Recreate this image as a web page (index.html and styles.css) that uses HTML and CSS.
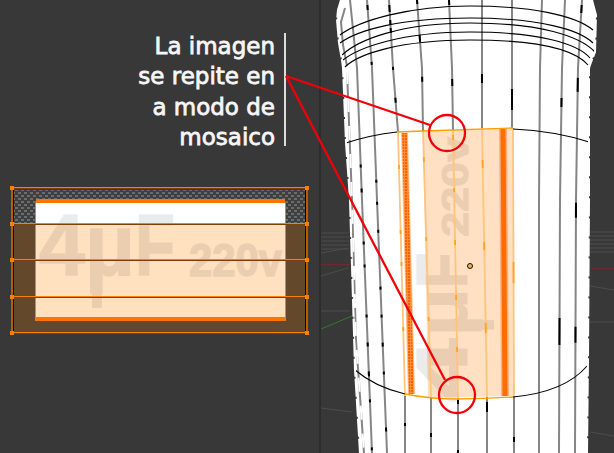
FILE: index.html
```html
<!DOCTYPE html>
<html lang="es">
<head>
<meta charset="utf-8">
<title>Mosaico UV</title>
<link rel="stylesheet" href="styles.css">
</head>
<body>
<main class="stage">
<svg class="scene" width="614" height="453" viewBox="0 0 614 453" xmlns="http://www.w3.org/2000/svg">
  <defs>
    <pattern id="check" width="6" height="6" patternUnits="userSpaceOnUse">
      <rect width="6" height="6" fill="#3f3f3f"/>
      <rect x="0" y="0" width="3" height="2" fill="#6c6c6c"/>
      <rect x="3" y="3" width="3" height="2" fill="#6c6c6c"/>
    </pattern>
    <pattern id="dots" width="3" height="3" patternUnits="userSpaceOnUse">
      <rect width="3" height="3" fill="#ff8a3a"/>
      <rect width="2" height="2" fill="#f86400"/>
    </pattern>
  </defs>

  <!-- viewport backdrop -->
  <g class="grid">
    <path d="M321 233H350M321 237H349M321 241H349M321 245H349M321 249H349M321 253L348 248M321 276L348 268M321 311H350"/>
    <path d="M590 232H614M590 236H614M590 240H614M590 244H614M590 248H614M590 252H614M590 286L614 290M590 322H614M590 432L614 436"/>
    <path d="M321 408L352 412"/>
  </g>
  <path class="axis-red" d="M321 264.500H351M590 268.500H614"/>
  <path class="axis-green" d="M321 329L352 316"/>
  <rect class="divider" x="319" y="0" width="2" height="453"/>

  <!-- UV editor -->
  <rect class="uv-check" x="13" y="190" width="293" height="34"/>
  <rect class="uv-dim" x="13" y="224" width="293" height="109"/>
  <rect class="uv-edge" x="35" y="203" width="251" height="118"/>
  <rect class="uv-white" x="36" y="199" width="249" height="25"/>
  <rect class="uv-peach" x="36" y="224" width="249" height="93"/>
  <rect class="uv-band" x="36" y="199" width="249" height="4"/>
  <rect class="uv-band" x="36" y="317" width="249" height="4"/>
  <g class="label-ink">
    <text class="ink-big" y="275"><tspan x="39" textLength="46" lengthAdjust="spacingAndGlyphs">4</tspan><tspan x="85" textLength="50" lengthAdjust="spacingAndGlyphs">μ</tspan><tspan x="135" textLength="40" lengthAdjust="spacingAndGlyphs">F</tspan></text>
    <rect x="92" y="285" width="10" height="23"/>
    <text class="ink-small" x="189" y="276" textLength="93" lengthAdjust="spacingAndGlyphs">220v</text>
  </g>
  <g class="uv-black">
    <path d="M12 188.500H308M12 224.500H308M12 260.500H308M12 297.500H308M12 333.500H308"/>
    <path d="M13.500 188V333M305.500 188V333"/>
  </g>
  <g class="uv-orange">
    <path d="M12 187.750H308M12 223.750H308M12 259.750H308M12 296.750H308M12 332.750H308"/>
  </g>
  <g class="uv-side">
    <path d="M12 188V333M307 188V333"/>
  </g>
  <g class="uv-vert">
    <rect x="10" y="186" width="4" height="4"/><rect x="305" y="186" width="4" height="4"/>
    <rect x="10" y="222" width="4" height="4"/><rect x="305" y="222" width="4" height="4"/>
    <rect x="10" y="258" width="4" height="4"/><rect x="305" y="258" width="4" height="4"/>
    <rect x="10" y="295" width="4" height="4"/><rect x="305" y="295" width="4" height="4"/>
    <rect x="10" y="331" width="4" height="4"/><rect x="305" y="331" width="4" height="4"/>
  </g>

  <!-- cylinder body -->
  <path class="body" d="M341 0L338 10L337 20L339 43L342 60L343 68L346 143L350 200L353 300L355 370L360 453H587L588 360L589 200L589 68L590 65L595 52L596 15L592 0Z"/>

  <!-- label on the cylinder -->
  <path class="label-peach" d="M423 131L513 128L514 396L428 398Z"/>
  <path class="stripe-dots-soft" d="M401 133H408L415 394H408Z"/>
  <path class="stripe-dots" d="M402 133H407L414 394H409Z"/>
  <path class="stripe-soft" d="M499 129H507L509 396H501Z"/>
  <path class="stripe-solid" d="M500.500 129H505.500L507.500 396H502.500Z"/>
  <g class="label-ink" transform="translate(467 395) rotate(-90) scale(1.07 .82) translate(-41 -275)">
    <text class="ink-big" y="275"><tspan x="34" textLength="60" lengthAdjust="spacingAndGlyphs">4</tspan><tspan x="96" textLength="45" lengthAdjust="spacingAndGlyphs">μ</tspan><tspan x="141" textLength="33" lengthAdjust="spacingAndGlyphs">F</tspan></text>
    <rect x="102" y="285" width="9" height="23"/>
    <text class="ink-small" x="189" y="276" textLength="93" lengthAdjust="spacingAndGlyphs">220v</text>
  </g>

  <!-- vertical mesh edges -->
  <g class="mesh">
    <path d="M345 8L341 22L343 45L347 66"/>
    <path d="M347 70L352 200L356 340L364 453"/>
    <path d="M350 0L357 68L362 200L372 453"/>
    <path d="M367 0L372 68L377 200L387 453"/>
    <path d="M389 0L393 68L398 132"/>
    <path d="M405 396L405 453"/>
    <path d="M417 0L422 68L423 131"/>
    <path d="M431 398V453"/>
    <path d="M449 0L452 68L453 130"/>
    <path d="M458 399V453"/>
    <path d="M482 0V128"/>
    <path d="M487 397V453"/>
    <path d="M512 0V128"/>
    <path d="M514 397V453"/>
    <path d="M542 0L540 68L539 200V453"/>
    <path d="M565 0L562 68L560 200L559 453"/>
    <path d="M582 0L578 68L576 200L575 453"/>
  </g>
  <g class="mesh-dash">
    <path stroke-dasharray="0 165 3 21 4 49 3 20 3 47 3 25 4 25 5 23 3 45 3 9" d="M350 0L357 68L362 200L372 453"/>
    <path stroke-dasharray="0 5 5 52 3 115 3 19 3 25 3 54 3 25 3 25 4 25 3 53 4 30" d="M367 0L372 68L377 200L387 453"/>
    <path stroke-dasharray="0 5 7 8 5 3 5 34 3 28 5 40" d="M389 0L393 68L398 132"/>
    <path stroke-dasharray="0 27 3 40" d="M405 396L405 453"/>
    <path stroke-dasharray="4 31 7 35 5 60" d="M417 0L422 68L423 131"/>
    <path stroke-dasharray="0 35 4 30" d="M431 398V453"/>
    <path stroke-dasharray="5 74 7 60" d="M449 0L452 68L453 130"/>
    <path stroke-dasharray="0 1 4 46 3 10" d="M458 399V453"/>
    <path stroke-dasharray="0 74 9 60" d="M482 0V128"/>
    <path stroke-dasharray="0 5 10 60" d="M487 397V453"/>
    <path stroke-dasharray="0 89 21 60" d="M512 0V128"/>
    <path stroke-dasharray="0 40 5 30" d="M514 397V453"/>
    <path stroke-dasharray="0 98 9 211 27 200" d="M565 0L562 68L560 200L559 453"/>
    <path stroke-dasharray="0 5 8 65 14 111 15 109 16 200" d="M582 0L578 68L576 200L575 453"/>
  </g>
  <g class="mesh-orange">
    <path d="M398 132L405 396"/>
    <path d="M423 131L431 398"/>
    <path d="M453 130L458 399"/>
    <path d="M482 128L487 397"/>
    <path d="M513 128L514 397"/>
  </g>
  <g class="mesh-orange-dash">
    <path stroke-dasharray="0 33 4 61 4 28 4 61 4 140" d="M398 132L405 396"/>
    <path stroke-dasharray="0 26 5 75 4 76 4 90" d="M423 131L431 398"/>
    <path stroke-dasharray="0 5 5 48 4 48 5 50 5 47 5 60" d="M453 130L458 399"/>
    <path stroke-dasharray="0 32 8 74 8 73 10 70" d="M482 128L487 397"/>
    <path stroke-dasharray="0 134 21 120" d="M513 128L514 397"/>
  </g>

  <!-- horizontal rings -->
  <g class="ring">
    <path d="M340 35C360 20 410 6 470 6S575 15 593 30"/>
    <path d="M340 43C358 30 400 18 470 18S580 30 593 43"/>
    <path d="M342 55C358 40 400 23 470 23S580 36 595 52"/>
    <path d="M343 60C358 48 400 32 470 32S578 44 590 58"/>
    <path d="M345 67C358 54 400 40 470 40S575 50 588 65"/>
    <path d="M346 143Q370 135 397 132"/>
    <path d="M513 129Q555 131 589 142"/>
    <path d="M355 370Q375 387 405 394"/>
    <path d="M513 397Q565 392 587 366"/>
  </g>
  <path class="ring-orange" d="M397 132L423 131L513 128"/>
  <path class="ring-orange" d="M405 394Q430 399 457 399T513 397"/>

  <!-- silhouette -->
  <g class="edge-cut">
    <path d="M347 70L352 200L356 340L364 453"/>
  </g>
  <g class="edge">
    <path d="M341 0L338 10L337 20L339 43L342 60L343 68L346 143L350 200L353 300L355 370L360 453"/>
    <path d="M592 0L596 15L595 52L590 65L589 68L589 200L588 360L587 453"/>
  </g>

  <circle class="pivot" cx="470" cy="266" r="2.500"/>

  <!-- callouts -->
  <rect class="rule" x="284" y="33" width="2" height="113"/>
  <g class="callout">
    <path d="M286 76L430 125"/>
    <path d="M286 76L445 380"/>
    <circle cx="447" cy="133" r="18"/>
    <circle cx="457" cy="395" r="18"/>
  </g>
</svg>
<p class="caption">La imagen<br>se repite en<br>a modo de<br>mosaico</p>
</main>
</body>
</html>
```
FILE: styles.css
```css
html, body { margin: 0; padding: 0; background: #383838; }
.stage { position: relative; width: 614px; height: 453px; overflow: hidden; background: #383838; }
.scene { position: absolute; left: 0; top: 0; display: block; }
.caption {
  position: absolute; right: 339px; top: 31px; margin: 0;
  font-family: "DejaVu Sans", sans-serif; font-size: 23px; line-height: 30.4px;
  -webkit-text-stroke: .8px #f6f6f6;
  color: #f6f6f6; text-align: right; white-space: nowrap;
}
.grid path { fill: none; stroke: #4c4c4c; stroke-width: 1; }
.axis-red { fill: none; stroke: #6e2a2a; stroke-width: 1; }
.axis-green { fill: none; stroke: #2f7a2f; stroke-width: 1; }
.divider { fill: #2c2c2c; }
.uv-check { fill: url(#check); }
.uv-dim { fill: #63482b; }
.uv-edge { fill: #a5927e; }
.uv-white { fill: #ffffff; }
.uv-peach { fill: #ffe0bf; }
.uv-band { fill: #ff7300; }
.label-ink { opacity: .075; fill: #000; stroke: #000; stroke-width: 1.5; font-family: "Liberation Sans", sans-serif; font-weight: 700; }
.label-ink rect { stroke: none; }
.ink-big { font-size: 87px; }
.ink-small { font-size: 46px; }
.uv-black path { fill: none; stroke: #000; stroke-width: 1; }
.uv-orange path { fill: none; stroke: #ff8000; stroke-width: 1.5; }
.uv-side path { fill: none; stroke: #b85c00; stroke-width: 2; }
.uv-vert rect { fill: #ff8000; }
.body { fill: #ffffff; }
.label-peach { fill: #ffe0c2; }
.stripe-dots { fill: url(#dots); }
.stripe-dots-soft { fill: #ffc08c; }
.stripe-soft { fill: #ffb080; }
.stripe-solid { fill: #ff6c00; }
.mesh path { fill: none; stroke: #858585; stroke-width: 2; }
.mesh-dash path { fill: none; stroke: #000; stroke-width: 2; }
.mesh-orange path { fill: none; stroke: #ffc37c; stroke-width: 1.8; }
.mesh-orange-dash path { fill: none; stroke: #ffa41e; stroke-width: 1.8; }
.ring path { fill: none; stroke: #000; stroke-width: 1.1; }
.ring-orange { fill: none; stroke: #ffa000; stroke-width: 1.3; }
.edge path { fill: none; stroke: #fff; stroke-width: 2; stroke-dasharray: 18 2; }
.edge-cut path { fill: none; stroke: #fff; stroke-width: 2; stroke-dasharray: 14 14; }
.pivot { fill: #ffb347; stroke: #111; stroke-width: 1; }
.rule { fill: #dcdcdc; }
.callout path, .callout circle { fill: none; stroke: #f0000a; stroke-width: 2.3; }
```
